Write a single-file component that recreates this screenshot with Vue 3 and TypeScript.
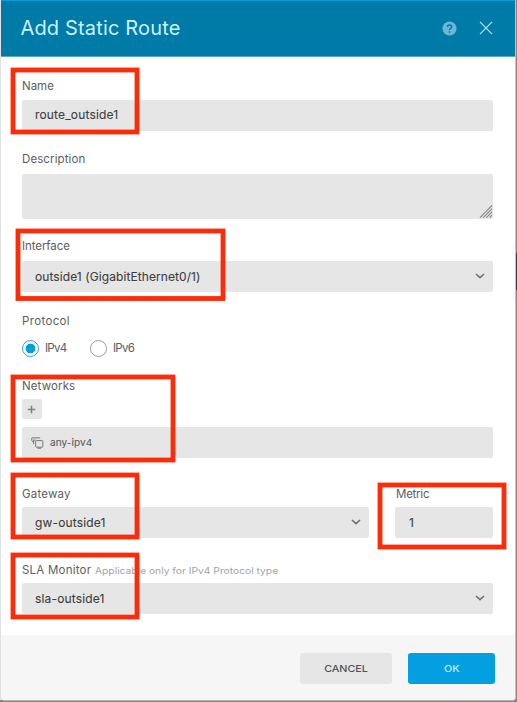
<script setup lang="ts">
import { ref } from 'vue'

interface Mark { x: number; y: number; w: number; h: number }

const name = ref('route_outside1')
const iface = ref('outside1 (GigabitEthernet0/1)')
const protocol = ref<'IPv4' | 'IPv6'>('IPv4')
const protocols = ['IPv4', 'IPv6'] as const
const gateway = ref('gw-outside1')
const metric = ref(1)
const monitor = ref('sla-outside1')

const marks: Mark[] = [
  { x: 13, y: 70, w: 124, h: 62 },
  { x: 18, y: 231, w: 205, h: 67.5 },
  { x: 13, y: 377, w: 160, h: 83 },
  { x: 13, y: 475, w: 124, h: 62 },
  { x: 380, y: 485, w: 124, h: 62 },
  { x: 13, y: 555, w: 124, h: 62 },
]
</script>

<template>
  <div class="page">
    <section class="dialog">
      <header class="header">
        <h1 class="title">Add Static Route</h1>
        <svg class="help" viewBox="0 0 16 16">
          <circle cx="8" cy="8" r="7.5" />
          <path d="M5.8 6.4C5.8 3.5 10.4 3.6 10.3 6.2 10.2 7.8 8 7.8 8 9.6M8 11v1.6" />
        </svg>
        <svg class="close" viewBox="0 0 14 14"><path d="M1 1l12 12M13 1L1 13" /></svg>
      </header>

      <main class="body">
        <div class="group name">
          <label class="label"><span>Name</span></label>
          <div class="field"><span class="v-name">{{ name }}</span></div>
        </div>
        <div class="group description">
          <label class="label"><span class="t-desc">Description</span></label>
          <div class="field area">
            <svg class="grip" viewBox="0 0 14 14"><path d="M.5 13.5l13-13M4 13.5L13.5 4M7.5 13.5l6-6M11 13.5l2.5-2.5" /></svg>
          </div>
        </div>
        <div class="group interface">
          <label class="label"><span class="t-int">Interface</span></label>
          <div class="field">
            <span class="v-int">{{ iface }}</span>
            <svg class="chevron" viewBox="0 0 10 6"><path d="M1 1l4 3.7L9 1" /></svg>
          </div>
        </div>
        <div class="group protocol">
          <label class="label"><span class="t-proto">Protocol</span></label>
          <div class="radios">
            <div v-for="p in protocols" :key="p" class="option" @click="protocol = p">
              <i class="radio" :class="{ on: protocol === p }"></i><span>{{ p }}</span>
            </div>
          </div>
        </div>
        <div class="group networks">
          <label class="label"><span class="t-net">Networks</span></label>
          <button class="add">
            <svg viewBox="0 0 10 10"><path d="M5 .8v8.4M.8 5h8.4" /></svg>
          </button>
          <div class="field network">
            <svg class="neticon" viewBox="0 0 13 12">
              <path d="M.8 3.8V.9h8.4M2.6 7.2V3h2M1 4.4h1.4" />
              <rect x="4.6" y="3.6" width="7.2" height="6.6" rx=".8" />
              <path d="M6.4 11.2h3.6" />
            </svg>
            <span class="v-net">any-ipv4</span>
          </div>
        </div>
        <div class="pair">
          <div class="group">
            <label class="label"><span class="t-gw">Gateway</span></label>
            <div class="field">
              <span class="v-gw">{{ gateway }}</span>
              <svg class="chevron" viewBox="0 0 10 6"><path d="M1 1l4 3.7L9 1" /></svg>
            </div>
          </div>
          <div class="group">
            <label class="label"><span class="t-metric">Metric</span></label>
            <div class="field"><span class="v-metric">{{ metric }}</span></div>
          </div>
        </div>
        <div class="group sla">
          <label class="label"><span class="t-sla">SLA Monitor</span><span class="hint">Applicable only for IPv4 Protocol type</span></label>
          <div class="field">
            <span class="v-sla">{{ monitor }}</span>
            <svg class="chevron" viewBox="0 0 10 6"><path d="M1 1l4 3.7L9 1" /></svg>
          </div>
        </div>
      </main>

      <footer class="footer">
        <button class="btn cancel"><span>CANCEL</span></button>
        <button class="btn ok"><span>OK</span></button>
      </footer>
    </section>
    <svg class="marks" viewBox="0 0 517 702">
      <rect v-for="(m, i) in marks" :key="i" :x="m.x" :y="m.y" :width="m.w" :height="m.h" />
    </svg>
  </div>
</template>

<style>
body { margin: 0; }
</style>

<style scoped>
.page {
  position: relative;
  box-sizing: border-box;
  width: 517px;
  height: 702px;
  padding: 0 1px 1px;
  overflow: hidden;
  background: linear-gradient(#858585, #858585) 0 700px / 517px 2px no-repeat,
    linear-gradient(#07516c, #07516c) 515px 253px / 2px 37px no-repeat,
    linear-gradient(90deg, #dfe2e3 0 1px, transparent 1px 515px, #858585 515px);
  font-family: Inter, "Liberation Sans", sans-serif;
  color: #5c5d60;
}
.dialog {
  display: flex;
  flex-direction: column;
  box-sizing: border-box;
  height: 701px;
  border-right: 1px solid #c4c4c4;
  border-bottom: 1px solid #b4b4b4;
  background: #fff;
  border-radius: 0 0 4px 4px;
  overflow: hidden;
}
.header {
  display: flex;
  align-items: center;
  box-sizing: border-box;
  height: 57px;
  margin-left: -1px;
  padding: 0 22px 1px 21px;
  border-top: 1px solid #049fd9;
  border-bottom: 1px solid #5eaac6;
  background: #007aa6;
  flex: none;
}
.title {
  flex: 1;
  margin: 0 0 1px -0.5px;
  font-size: 20px;
  line-height: 28px;
  font-weight: 400;
  letter-spacing: 0.16px;
  color: #c9f1ff;
}
.help { width: 15px; height: 15px; margin-right: 22px; }
.help circle { fill: #6bb7d5; }
.help path { fill: none; stroke: #007aa6; stroke-width: 1.7; }
.close { width: 14px; height: 14px; }
.close path { fill: none; stroke: #a4d9ed; stroke-width: 1.2; }

.body { flex: 1; padding: 21px 22px 0 21px; }
.group { display: flex; flex-direction: column; gap: 6px; }
.label {
  display: flex;
  align-items: center;
  height: 16px;
  font-size: 11.5px;
  line-height: 16px;
  white-space: nowrap;
}
.t-desc { letter-spacing: 0.1px; }
.t-int { letter-spacing: -0.08px; }
.t-proto { letter-spacing: 0.35px; }
.t-net { letter-spacing: 0.12px; }
.t-gw { letter-spacing: 0.2px; }
.t-sla { letter-spacing: 0.22px; }
.t-metric { letter-spacing: -0.25px; margin-left: 1px; }
.field {
  display: flex;
  align-items: center;
  justify-content: space-between;
  box-sizing: border-box;
  height: 31px;
  padding: 0 8px 0 13px;
  border-radius: 2px;
  background: #e6e6e6;
  font-size: 12px;
  line-height: 16px;
  letter-spacing: 0.16px;
  color: #3d3e40;
  white-space: nowrap;
  -webkit-text-stroke: 0.1px #3d3e40;
}
.name .field { padding-bottom: 1px; }
.v-int { letter-spacing: 0.08px; }
.v-metric { margin-left: 1px; }
.area { height: 45px; align-items: flex-end; justify-content: flex-end; padding: 0 0 1px; }
.grip { width: 14px; height: 13px; }
.grip path { fill: none; stroke: #858585; stroke-width: 1.2; }
.chevron { width: 10px; height: 6px; margin-bottom: 2px; }
.chevron path { fill: none; stroke: #707173; stroke-width: 1.6; }
.description { margin-top: 20px; gap: 7px; }
.interface { margin-top: 19px; gap: 7px; }
.protocol { margin-top: 21px; gap: 10px; }
.radios { display: flex; gap: 24px; height: 18px; font-size: 11.5px; }
.option { display: flex; align-items: center; gap: 6px; width: 44px; letter-spacing: -0.75px; }
.option span { margin-bottom: 1px; }
.radio {
  box-sizing: border-box;
  flex: none;
  width: 17px;
  height: 17px;
  border: 1px solid #9b9b9b;
  border-radius: 50%;
}
.radio.on {
  border: 1.5px solid #2aa5db;
  background: radial-gradient(circle, #049fd9 0 4.5px, #fff 5.2px);
}
.networks { margin-top: 21px; gap: 0; }
.add {
  display: flex;
  align-items: center;
  justify-content: center;
  width: 20px;
  height: 20px;
  margin: 5px 0 8px;
  padding: 0 2px 0 0;
  box-sizing: border-box;
  border: 0;
  border-radius: 2px;
  background: #e6e6e6;
}
.add svg { width: 9px; height: 9px; }
.add path { stroke: #808183; stroke-width: 1.7; }
.network { justify-content: flex-start; padding-left: 9px; color: #5c5d60; -webkit-text-stroke-color: #5c5d60; }
.neticon { width: 13px; height: 12px; margin-right: 6px; }
.neticon path, .neticon rect { fill: none; stroke: #747578; stroke-width: 1; }
.pair { display: grid; grid-template-columns: 347px 98px; gap: 26px; margin-top: 28px; }
.pair .group { gap: 5px; }
.sla { margin-top: 24px; gap: 5px; }

.hint {
  margin-left: 4px;
  font-size: 9px;
  color: #a3a4a7;
  transform: scaleX(1.14);
  transform-origin: left;
  margin-top: 2px;
}
.v-net { font-size: 9.3px; letter-spacing: 0.05px; transform: scaleX(1.08); transform-origin: left; }

.footer {
  display: flex;
  align-items: flex-start;
  justify-content: flex-end;
  gap: 16px;
  box-sizing: border-box;
  flex: none;
  height: 65px;
  padding: 18px 20px 0;
  background: #f6f6f6;
}
.btn {
  height: 31px;
  padding: 0;
  border: 0;
  border-radius: 3px;
  font: 500 9.3px/29px Inter, "Liberation Sans", sans-serif;
}
.btn span { display: inline-block; transform: scaleX(1.15); }
.cancel { width: 92px; background: #e6e6e6; color: #505153; }
.ok { width: 87px; background: #049fe0; color: #c8edff; }
.marks { position: absolute; inset: 0; width: 517px; height: 702px; pointer-events: none; }
.marks rect { fill: none; stroke: #fa2c0a; stroke-width: 4.8; }
</style>
